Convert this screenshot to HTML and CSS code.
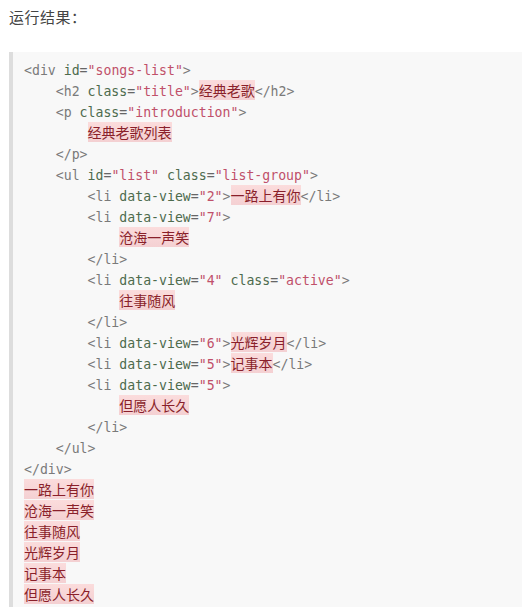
FILE: index.html
```html
<!DOCTYPE html>
<html lang="zh">
<head>
<meta charset="utf-8">
<link rel="stylesheet" href="styles.css">
</head>
<body>
<p class="label">运行结果：</p>
<pre class="code"><span class="t">&lt;div</span> <span class="a">id</span>=<span class="v">"songs-list"</span><span class="t">&gt;</span>
    <span class="t">&lt;h2</span> <span class="a">class</span>=<span class="v">"title"</span><span class="t">&gt;</span><span class="z">经典老歌</span><span class="t">&lt;/h2&gt;</span>
    <span class="t">&lt;p</span> <span class="a">class</span>=<span class="v">"introduction"</span><span class="t">&gt;</span>
        <span class="z">经典老歌列表</span>
    <span class="t">&lt;/p&gt;</span>
    <span class="t">&lt;ul</span> <span class="a">id</span>=<span class="v">"list"</span> <span class="a">class</span>=<span class="v">"list-group"</span><span class="t">&gt;</span>
        <span class="t">&lt;li</span> <span class="a">data-view</span>=<span class="v">"2"</span><span class="t">&gt;</span><span class="z">一路上有你</span><span class="t">&lt;/li&gt;</span>
        <span class="t">&lt;li</span> <span class="a">data-view</span>=<span class="v">"7"</span><span class="t">&gt;</span>
            <span class="z">沧海一声笑</span>
        <span class="t">&lt;/li&gt;</span>
        <span class="t">&lt;li</span> <span class="a">data-view</span>=<span class="v">"4"</span> <span class="a">class</span>=<span class="v">"active"</span><span class="t">&gt;</span>
            <span class="z">往事随风</span>
        <span class="t">&lt;/li&gt;</span>
        <span class="t">&lt;li</span> <span class="a">data-view</span>=<span class="v">"6"</span><span class="t">&gt;</span><span class="z">光辉岁月</span><span class="t">&lt;/li&gt;</span>
        <span class="t">&lt;li</span> <span class="a">data-view</span>=<span class="v">"5"</span><span class="t">&gt;</span><span class="z">记事本</span><span class="t">&lt;/li&gt;</span>
        <span class="t">&lt;li</span> <span class="a">data-view</span>=<span class="v">"5"</span><span class="t">&gt;</span>
            <span class="z">但愿人长久</span>
        <span class="t">&lt;/li&gt;</span>
    <span class="t">&lt;/ul&gt;</span>
<span class="t">&lt;/div&gt;</span>
<span class="z">一路上有你</span>
<span class="z">沧海一声笑</span>
<span class="z">往事随风</span>
<span class="z">光辉岁月</span>
<span class="z">记事本</span>
<span class="z">但愿人长久</span></pre>
</body>
</html>
```
FILE: styles.css
```css
html, body {
  margin: 0;
  padding: 0;
  background: #fff;
}
body {
  padding: 0 0 0 9px;
  font-family: "Noto Sans CJK SC", sans-serif;
}
.label {
  margin: 0;
  padding-top: 6px;
  height: 46px;
  font-size: 15px;
  line-height: 22px;
  color: #444;
  letter-spacing: 0.5px;
}
.code {
  margin: 0;
  background: #f8f8f8;
  border-left: 4px solid #dddddd;
  padding: 8px 0 0 11px;
  font-family: "DejaVu Sans Mono", "Noto Sans CJK SC", monospace;
  font-size: 13.2px;
  line-height: 21px;
  color: #666;
  white-space: pre;
  min-height: 600px;
}
.t { color: #7a7a7a; }
.a { color: #4d6b4d; }
.v { color: #c0506a; }
.z {
  font-family: "Noto Sans CJK SC", sans-serif;
  font-size: 14px;
  line-height: 14px;
  color: #8a1f2a;
  background: linear-gradient(#fbdcdc, #f4d0d2);
}
```
